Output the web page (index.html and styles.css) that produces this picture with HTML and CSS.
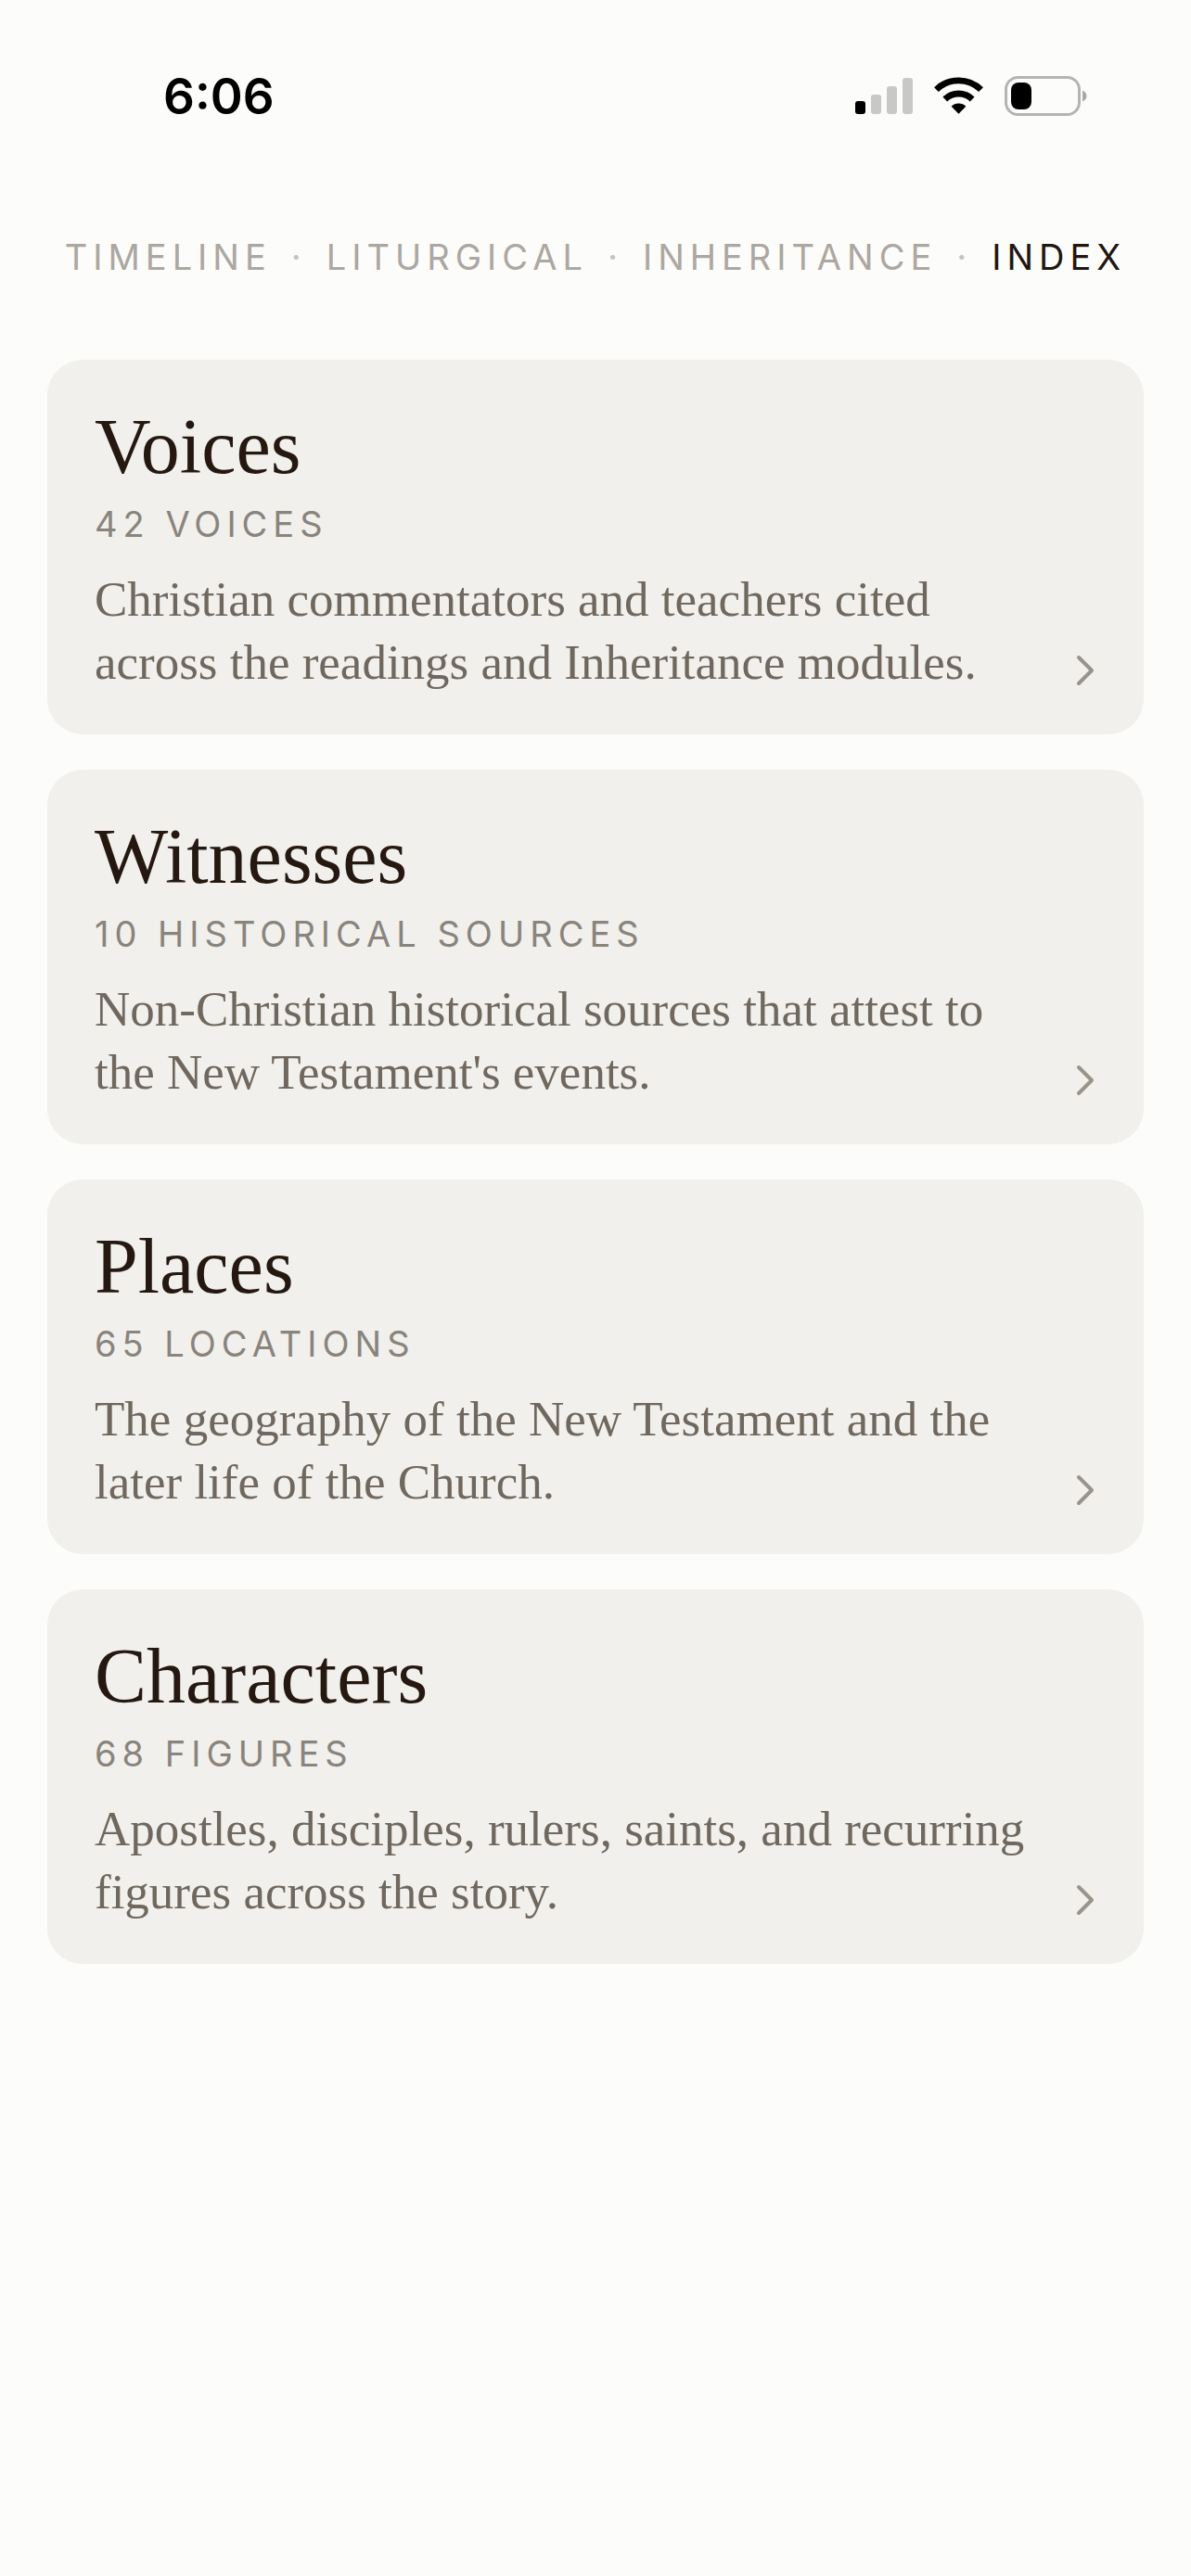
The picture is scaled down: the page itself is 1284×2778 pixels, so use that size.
FILE: index.html
```
<!DOCTYPE html>
<html lang="en">
<head>
  <meta charset="UTF-8">
  <meta name="viewport" content="width=device-width, initial-scale=1">
  <title>Index</title>
  <link rel="stylesheet" href="styles.css">
</head>
<body>

  <header class="status-bar">
    <span class="time">6:06</span>
    <div class="status-icons">
      <svg class="signal" width="62" height="44" viewBox="0 0 62 44" aria-label="Signal">
        <rect x="0" y="27" width="11" height="14" rx="3" fill="#000"/>
        <rect x="17" y="20" width="11" height="21" rx="3" fill="#c8c8c7"/>
        <rect x="34" y="11" width="11" height="30" rx="3" fill="#c8c8c7"/>
        <rect x="51" y="2" width="11" height="39" rx="3" fill="#c8c8c7"/>
      </svg>
      <svg class="wifi" width="53" height="44" viewBox="0 0 54 44" aria-label="Wi-Fi">
        <g fill="none" stroke="#000" stroke-width="7">
          <path d="M2.5 14.5 A35 35 0 0 1 51.5 14.5"/>
          <path d="M12 25 A21.5 21.5 0 0 1 42 25"/>
        </g>
        <path d="M27 41 L19 33 A11.5 11.5 0 0 1 35 33 Z" fill="#000"/>
      </svg>
      <svg class="battery" width="89" height="44" viewBox="0 0 89 44" aria-label="Battery">
        <rect x="1.5" y="1.5" width="79" height="40" rx="13" fill="none" stroke="#b4b4b3" stroke-width="3"/>
        <rect x="7" y="7" width="22" height="29" rx="8" fill="#000"/>
        <path d="M84 15.5 C90 18 90 25 84 27.5 Z" fill="#a8a8a7"/>
      </svg>
    </div>
  </header>

  <nav class="tabs">
    <a href="#timeline">TIMELINE</a>
    <span class="dot">·</span>
    <a href="#liturgical">LITURGICAL</a>
    <span class="dot">·</span>
    <a href="#inheritance">INHERITANCE</a>
    <span class="dot">·</span>
    <a href="#index" class="active" aria-current="page">INDEX</a>
  </nav>

  <main class="cards">
    <a class="card" href="#voices">
      <div class="card-text">
        <h2>Voices</h2>
        <p class="count">42 VOICES</p>
        <p class="desc">Christian commentators and teachers cited across the readings and Inheritance modules.</p>
      </div>
      <svg class="chevron" width="24" height="36" viewBox="0 0 24 36"><path d="M5 4 L19 18 L5 32"/></svg>
    </a>

    <a class="card" href="#witnesses">
      <div class="card-text">
        <h2>Witnesses</h2>
        <p class="count">10 HISTORICAL SOURCES</p>
        <p class="desc">Non-Christian historical sources that attest to the New Testament's events.</p>
      </div>
      <svg class="chevron" width="24" height="36" viewBox="0 0 24 36"><path d="M5 4 L19 18 L5 32"/></svg>
    </a>

    <a class="card" href="#places">
      <div class="card-text">
        <h2>Places</h2>
        <p class="count">65 LOCATIONS</p>
        <p class="desc">The geography of the New Testament and the later life of the Church.</p>
      </div>
      <svg class="chevron" width="24" height="36" viewBox="0 0 24 36"><path d="M5 4 L19 18 L5 32"/></svg>
    </a>

    <a class="card" href="#characters">
      <div class="card-text">
        <h2>Characters</h2>
        <p class="count">68 FIGURES</p>
        <p class="desc">Apostles, disciples, rulers, saints, and recurring figures across the story.</p>
      </div>
      <svg class="chevron" width="24" height="36" viewBox="0 0 24 36"><path d="M5 4 L19 18 L5 32"/></svg>
    </a>
  </main>

</body>
</html>
```
FILE: styles.css
```
* {
  box-sizing: border-box;
}

body {
  margin: 0;
  min-height: 100vh;
  background-color: #fcfcfa;
  font-family: Inter, "Liberation Sans", sans-serif;
}

a {
  color: inherit;
  text-decoration: none;
}

.status-bar {
  display: flex;
  justify-content: space-between;
  align-items: center;
  padding: 72px 112px 0 176px;
}

.time {
  font-size: 53px;
  font-weight: 600;
  line-height: 64px;
  color: #000;
}

.status-icons {
  display: flex;
  align-items: center;
  gap: 23px;
}

.tabs {
  display: flex;
  justify-content: center;
  gap: 21px;
  padding: 116px 48px 86px;
  font-size: 38px;
  line-height: 50px;
  letter-spacing: 6px;
  white-space: nowrap;
  color: #aca7a0;
}

.tabs .dot {
  color: #c6c2bd;
}

.tabs .active {
  color: #1f1611;
}

.cards {
  display: flex;
  flex-direction: column;
  gap: 38px;
  padding: 0 51px;
}

.card {
  display: flex;
  align-items: flex-end;
  gap: 44px;
  padding: 50px 51px 44px;
  border-radius: 38px;
  background-color: #f1f0ed;
}

.card-text {
  flex: 1;
}

.card h2 {
  margin: 0;
  font-family: "Liberation Serif", serif;
  font-size: 84px;
  font-weight: 400;
  line-height: 88px;
  color: #251811;
}

.count {
  margin: 16px 0 24px;
  font-size: 38px;
  line-height: 46px;
  letter-spacing: 6px;
  color: #89847c;
}

.desc {
  margin: 0;
  font-family: "Liberation Serif", serif;
  font-size: 53px;
  line-height: 68px;
  color: #70685e;
}

.chevron {
  flex: none;
  margin-bottom: 7px;
  fill: none;
  stroke: #99938b;
  stroke-width: 4;
  stroke-linecap: round;
  stroke-linejoin: round;
}
```
